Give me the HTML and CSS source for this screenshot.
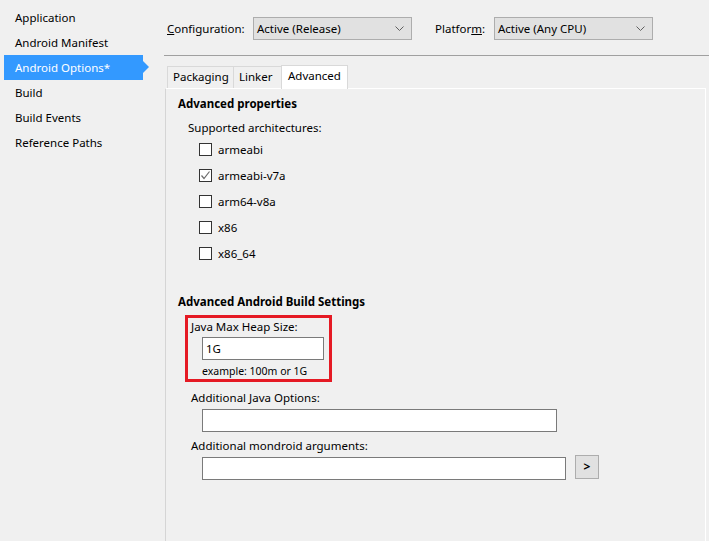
FILE: index.html
```html
<!DOCTYPE html>
<html>
<head>
<meta charset="utf-8">
<link rel="stylesheet" href="styles.css">
</head>
<body>
<div class="app">
  <nav class="sidebar">
    <div class="nav-item">Application</div>
    <div class="nav-item">Android Manifest</div>
    <div class="nav-item selected">Android Options*</div>
    <div class="nav-item">Build</div>
    <div class="nav-item">Build Events</div>
    <div class="nav-item">Reference Paths</div>
  </nav>
  <main class="main">
    <div class="config-row">
      <span class="cfg-label cfg-label-conf"><u>C</u>onfiguration:</span>
      <div class="combo"><span>Active (Release)</span><svg class="chev" width="9" height="5" viewBox="0 0 9 5"><path d="M0.5 0.5 L4.5 4.5 L8.5 0.5" fill="none" stroke="#606060" stroke-width="1"/></svg></div>
      <span class="cfg-label cfg-label-plat">Platfor<u>m</u>:</span>
      <div class="combo"><span>Active (Any CPU)</span><svg class="chev" width="9" height="5" viewBox="0 0 9 5"><path d="M0.5 0.5 L4.5 4.5 L8.5 0.5" fill="none" stroke="#606060" stroke-width="1"/></svg></div>
    </div>
    <div class="rule"></div>
    <div class="tabs">
      <div class="tab">Packaging</div>
      <div class="tab">Linker</div>
      <div class="tab active">Advanced</div>
    </div>
    <div class="panel">
      <div class="heading">Advanced properties</div>
      <div class="sub-label">Supported architectures:</div>
      <div class="checks">
        <div class="check-row"><span class="box"></span><span>armeabi</span></div>
        <div class="check-row"><span class="box"><svg width="11" height="11" viewBox="0 0 11 11"><path d="M1.5 5.5 L4 8.5 L9.5 1.5" fill="none" stroke="#6b6b6b" stroke-width="1.2"/></svg></span><span>armeabi-v7a</span></div>
        <div class="check-row"><span class="box"></span><span>arm64-v8a</span></div>
        <div class="check-row"><span class="box"></span><span>x86</span></div>
        <div class="check-row"><span class="box"></span><span>x86_64</span></div>
      </div>
      <div class="heading heading-2">Advanced Android Build Settings</div>
      <div class="highlight">
        <div class="field-label">Java Max Heap Size:</div>
        <div class="input input-heap">1G</div>
        <div class="hint">example: 100m or 1G</div>
      </div>
      <div class="field-label field-outer">Additional Java Options:</div>
      <div class="input input-java"></div>
      <div class="field-label field-outer field-mon">Additional mondroid arguments:</div>
      <div class="mon-row">
        <div class="input input-mon"></div>
        <div class="btn">&gt;</div>
      </div>
    </div>
  </main>
</div>
</body>
</html>
```

FILE: styles.css
```css
html, body {
  margin: 0;
  padding: 0;
  background: #f0f0f0;
  height: 100%;
  overflow: hidden;
}
body {
  font-family: "Noto Sans", "Open Sans", sans-serif;
  font-size: 11.5px;
  color: #000;
}
.app {
  display: flex;
  height: 541px;
}
.sidebar {
  width: 165px;
  flex: none;
  padding-top: 5px;
}
.nav-item {
  height: 25px;
  line-height: 25px;
  padding-left: 15px;
  white-space: nowrap;
}
.nav-item.selected {
  position: relative;
  margin-left: 4px;
  width: 128px;
  padding-left: 11px;
  background: #3399ff;
  color: #fff;
}
.nav-item.selected::after {
  content: "";
  position: absolute;
  right: -6px;
  top: 6px;
  border-left: 6px solid #3399ff;
  border-top: 6px solid transparent;
  border-bottom: 6px solid transparent;
}
.main {
  flex: 1;
  display: flex;
  flex-direction: column;
  min-width: 0;
}
.config-row {
  display: flex;
  align-items: center;
  margin-top: 17px;
  height: 23px;
}
.cfg-label {
  white-space: nowrap;
}
.cfg-label-conf {
  padding-left: 2px;
  width: 86px;
}
.cfg-label-plat {
  margin-left: 23px;
  width: 59px;
}
.combo {
  box-sizing: border-box;
  width: 159px;
  height: 23px;
  background: #e1e1e1;
  border: 1px solid #adadad;
  display: flex;
  align-items: center;
  justify-content: space-between;
  padding: 0 7px 0 3px;
}
.chev {
  display: block;
}
.rule {
  margin-top: 15px;
  height: 1px;
  background: #a0a0a0;
  margin-left: -1px;
}
.tabs {
  display: flex;
  align-items: flex-end;
  margin-top: 8px;
  padding-left: 2px;
  height: 24px;
}
.tab {
  box-sizing: border-box;
  height: 22px;
  line-height: 20px;
  padding: 0 5px;
  border: 1px solid #d9d9d9;
  border-bottom: none;
  border-right: none;
  background: #f0f0f0;
}
.tab:nth-child(1) { width: 66px; }
.tab:nth-child(2) { width: 48px; }
.tab.active {
  width: 67px;
  height: 24px;
  line-height: 20px;
  background: #fff;
  border-right: 1px solid #d9d9d9;
  padding-left: 6px;
  margin-bottom: -1px;
  position: relative;
}
.panel {
  flex: 1;
  width: 541px;
  box-sizing: border-box;
  border-top: 1px solid #fff;
  border-left: 1px solid #d5d5d5;
  border-right: 1px solid #fff;
  padding: 7px 0 0 12px;
  display: flex;
  flex-direction: column;
  align-items: flex-start;
}
.heading {
  font-weight: bold;
  height: 16px;
  line-height: 16px;
}
.heading-2 {
  margin-top: 28px;
}
.sub-label {
  margin-top: 8px;
  margin-left: 10px;
  height: 16px;
  line-height: 16px;
}
.checks {
  margin-top: 0;
  margin-left: 21px;
}
.check-row {
  height: 26px;
  display: flex;
  align-items: center;
}
.box {
  box-sizing: border-box;
  width: 13px;
  height: 13px;
  border: 1px solid #333;
  background: #fff;
  margin-right: 6px;
  display: flex;
  align-items: center;
  justify-content: center;
}
.box svg { display: block; }
.highlight {
  margin-top: 5px;
  margin-left: 7px;
  box-sizing: border-box;
  width: 147px;
  height: 67px;
  border: 3px solid #e51a24;
  padding: 1px 0 0 3px;
}
.field-label {
  height: 16px;
  line-height: 16px;
  white-space: nowrap;
}
.input {
  box-sizing: border-box;
  height: 23px;
  border: 1px solid #7a7a7a;
  background: #fff;
  line-height: 21px;
  padding-left: 3px;
}
.input-heap {
  margin-top: 2px;
  margin-left: 11px;
  width: 122px;
}
.hint {
  margin-top: 4px;
  margin-left: 11px;
  font-size: 10.5px;
  height: 14px;
  line-height: 14px;
}
.field-outer {
  margin-left: 13px;
  margin-top: 8px;
}
.field-mon {
  margin-top: 6px;
}
.input-java {
  margin-top: 3px;
  margin-left: 24px;
  width: 355px;
}
.mon-row {
  display: flex;
  align-items: flex-end;
  margin-left: 24px;
  margin-top: 1px;
}
.input-mon {
  width: 364px;
}
.btn {
  box-sizing: border-box;
  width: 24px;
  height: 24px;
  margin-left: 9px;
  margin-bottom: 1px;
  background: #e1e1e1;
  border: 1px solid #adadad;
  font-weight: bold;
  text-align: center;
  line-height: 21px;
  font-size: 12px;
}
```
